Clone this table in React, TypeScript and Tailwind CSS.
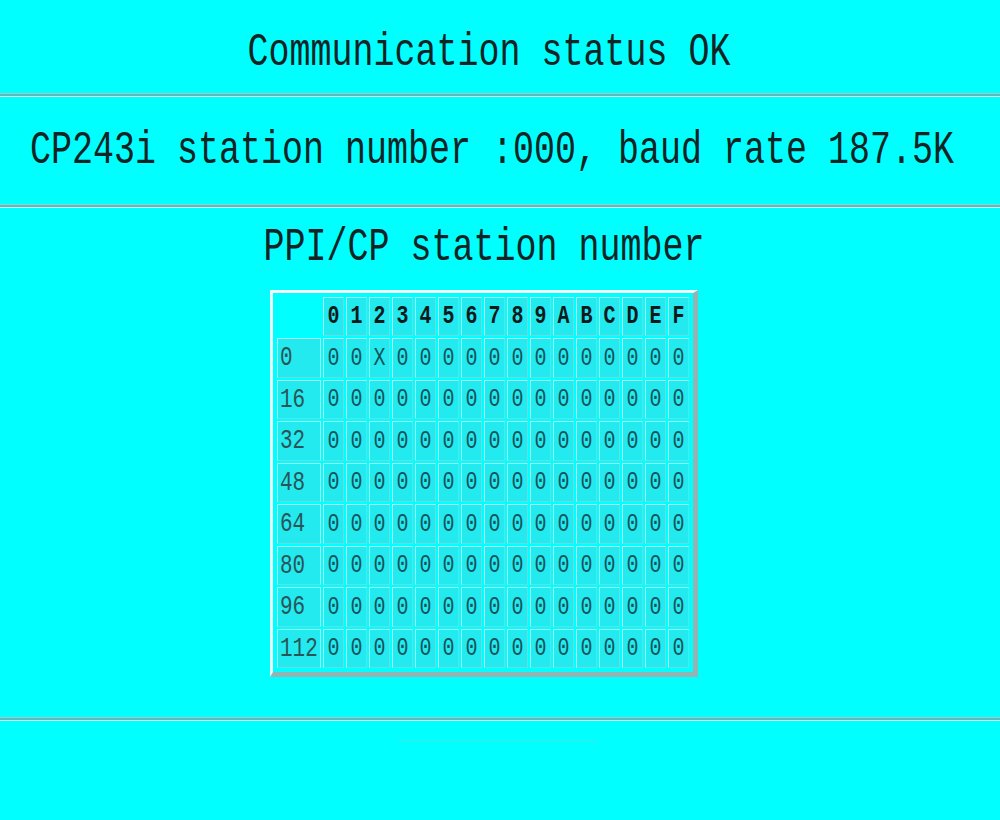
import React from "react";

const HEX = ["0", "1", "2", "3", "4", "5", "6", "7", "8", "9", "A", "B", "C", "D", "E", "F"];
const ROWS = [0, 16, 32, 48, 64, 80, 96, 112];

function Separator() {
  return (
    <div className="flex flex-col">
      <div className="h-[1px] bg-[#8fd0d0]" />
      <div className="h-[2px] bg-[#5cbcbc]" />
      <div className="h-[1px] bg-[#c8ffff]" />
    </div>
  );
}

function Cell({ children, bold }: { children?: React.ReactNode; bold?: boolean }) {
  return (
    <div className="h-full w-full p-[1px]">
      <div
        className={
          "flex h-full w-full items-center justify-center border border-t-[#a0ffff] border-l-[#a0ffff] border-r-[#5ee0e4] border-b-[#5ee0e4] bg-[#22eaee] " +
          (bold ? "font-bold text-[#0c1a1c]" : "text-[#13525a]")
        }
      >
        <span className="inline-block scale-y-[1.3]">{children}</span>
      </div>
    </div>
  );
}

export default function App() {
  return (
    <div
      className="flex h-[820px] w-[1000px] flex-col bg-[#00ffff] text-[#142424]"
      style={{ fontFamily: '"Liberation Mono", "DejaVu Sans Mono", monospace' }}
    >
      {/* status */}
      <div className="flex h-[93px] items-center justify-center pr-[22px] pt-[14px] text-[35px]">
        <span className="inline-block scale-y-[1.3]">Communication status OK</span>
      </div>
      <Separator />

      {/* station / baud */}
      <div className="flex h-[107px] items-center justify-center pr-[16px] pt-[2px] text-[35px]">
        <span className="inline-block scale-y-[1.3] whitespace-pre">CP243i station number :000, baud rate 187.5K</span>
      </div>
      <Separator />

      {/* station table */}
      <div className="flex h-[509px] flex-col items-center pr-[32px]">
        <div className="mt-[14px] text-[35px]">
          <span className="inline-block scale-y-[1.3]">PPI/CP station number</span>
        </div>
        <div className="mt-[15px] border-t-[3px] border-l-[3px] border-r-[5px] border-b-[5px] border-t-[#f4ffff] border-l-[#e8ffff] border-r-[#94b4b4] border-b-[#94b4b4] p-[3px]">
          <div className="grid grid-cols-[46px_repeat(16,23px)] grid-rows-[repeat(9,41.5px)] text-[20px]">
            <div />
            {HEX.map((h) => (
              <Cell key={h} bold>
                {h}
              </Cell>
            ))}
            {ROWS.map((r) => (
              <React.Fragment key={r}>
                <div className="h-full w-full p-[1px]">
                  <div className="flex h-full w-full items-center border border-t-[#a0ffff] border-l-[#a0ffff] border-r-[#a0ffff] border-b-[#5ee0e4] bg-[#22eaee] pl-[2px] text-[21px] text-[#2a5558]">
                    <span className="inline-block scale-y-[1.3]">{r}</span>
                  </div>
                </div>
                {HEX.map((h, i) => (
                  <Cell key={h}>{r === 0 && i === 2 ? "X" : "0"}</Cell>
                ))}
              </React.Fragment>
            ))}
          </div>
        </div>
      </div>
      <Separator />

      {/* footer */}
      <div className="flex flex-1 flex-col items-center pt-[19px]">
        <div className="ml-[-6px] h-[1px] w-[200px] bg-[#3ee8e8]" />
      </div>
    </div>
  );
}
